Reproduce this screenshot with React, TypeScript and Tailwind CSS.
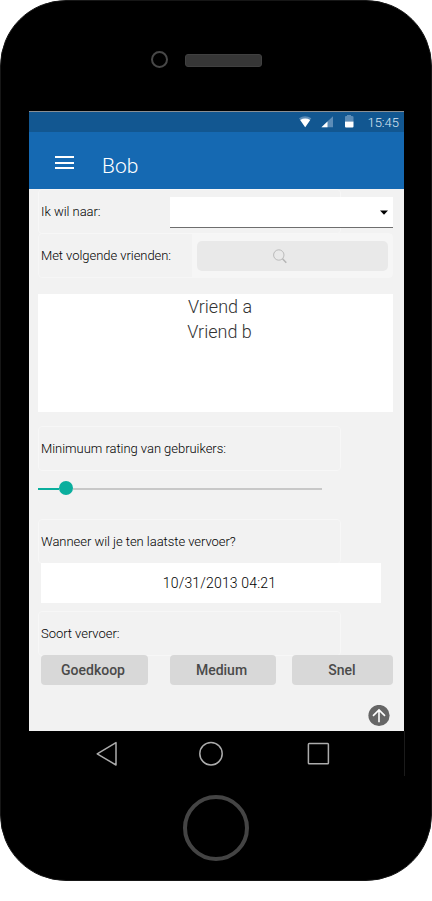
import type { ReactNode } from "react";

function FieldLabel({ children }: { children: ReactNode }) {
  return (
    <div className="flex h-[45px] w-[303px] shrink-0 items-center rounded-[4px] border border-[#f7f7f7] pl-[2px] text-[13px] font-light leading-4 tracking-[-0.04px] text-black">
      <span className="whitespace-nowrap">{children}</span>
    </div>
  );
}

function StatusBar() {
  return (
    <div className="flex h-[21px] items-center justify-end border-t border-[#8a8f94] bg-[#125791] pr-[5px]">
      <svg width="55" height="20" viewBox="0 0 55 20" className="mr-[13px]" aria-hidden="true">
        <path d="M0 6.200Q6 2.500 12.300 6.200L6.200 15Z" fill="#5c8cb7" />
        <path d="M1.200 8Q6.200 5.200 11.200 8L6.200 15.300Z" fill="#fff" />
        <path d="M22.500 15.300V15L34 4.300V15.300Z" fill="#5c8cb7" />
        <path d="M22.500 15.300L28.500 9.600V15.300Z" fill="#fff" />
        <path d="M46 9.500V5Q46 4 47 4H48V3H52V4H53Q54.500 4 54.500 5V9.500Z" fill="#5c8cb7" />
        <path d="M46 9.500H54.500V14.500Q54.500 15.500 53.500 15.500H47Q46 15.500 46 14.500Z" fill="#fff" />
      </svg>
      <span className="mt-px text-[13px] font-light leading-5 text-[#dce8f3]">15:45</span>
    </div>
  );
}

function AppBar() {
  return (
    <header className="flex h-[57px] items-center bg-[#1569b2] pl-[26px] text-white">
      <div className="mt-[4px] flex flex-col gap-[3.500px]">
        <div className="h-[2px] w-[19px] bg-white" />
        <div className="h-[2px] w-[19px] bg-white" />
        <div className="h-[2px] w-[19px] bg-white" />
      </div>
      <h1 className="mt-[11px] ml-7 text-[21px] font-light leading-7">Bob</h1>
    </header>
  );
}

function NavBar() {
  return (
    <nav className="-mr-px h-[45px] border-r border-[#1b1b1b] bg-black">
      <svg width="375" height="45" viewBox="0 0 375 45" fill="none" stroke="#acacac" strokeWidth="1.500" aria-hidden="true">
        <path d="M68.200 22.800L87 11.600V34Z" strokeLinejoin="round" />
        <circle cx="182" cy="22.700" r="11.200" />
        <rect x="279.400" y="12.600" width="20" height="20.200" rx=".8" />
      </svg>
    </nav>
  );
}

const transport = [
  { name: "Goedkoop", size: "w-[107px] pr-[3px]" },
  { name: "Medium", size: "ml-[22px] w-[106px] pr-[3px]" },
  { name: "Snel", size: "ml-4 w-[101px] pr-px" },
];

export default function App() {
  return (
    <div className="h-[901px] w-[432px] bg-white font-['Roboto','Liberation_Sans',sans-serif]">
      <div className="flex h-[881px] flex-col rounded-[66px] border border-[#161616] bg-black">
        <div className="flex h-[110px] shrink-0 pt-[50px] pl-[150px]">
          <div className="size-[17px] rounded-full border-[2.500px] border-[#484848]" />
          <div className="mt-[3px] ml-[16.500px] h-[13px] w-[77px] rounded-[3px] border border-[#404040] bg-[#363636]" />
        </div>
        <div className="ml-7 w-[375px] shrink-0">
          <StatusBar />
          <AppBar />
          <main className="h-[542px] bg-[#f2f2f2] pl-[9px]">
            <div className="flex h-[45px] items-start">
              <FieldLabel>Ik wil naar:</FieldLabel>
              <button className="z-10 mt-2 -ml-[171px] flex h-[31px] w-[223px] items-center justify-end border-b border-[#6e6e6e] bg-white pr-[5px]">
                <svg width="8" height="5" viewBox="0 0 8 5" aria-hidden="true">
                  <path d="M0 .5H8L4 4.700Z" fill="#000" />
                </svg>
              </button>
            </div>
            <div className="-mt-px flex h-[45px] w-[355px] rounded-[4px] border border-[#f6f6f6]">
              <div className="flex w-[153px] items-center pl-[2px] text-[13px] font-light tracking-[-0.05px] text-black">
                <span className="whitespace-nowrap">Met volgende vrienden:</span>
              </div>
              <div className="flex flex-1 bg-[#f6f6f6] pt-[7px] pl-[5px]">
                <button className="flex h-[30px] w-[191px] items-center justify-center rounded-[5px] bg-[#e9e9e9] pr-[26px]">
                  <svg width="14" height="15" viewBox="0 0 14 15" className="mt-px" fill="none" stroke="#b5b5b5" aria-hidden="true">
                    <circle cx="5.800" cy="6" r="5.200" strokeWidth=".9" />
                    <path d="M9.500 9.800L13.300 13.700" strokeWidth="1.500" />
                  </svg>
                </button>
              </div>
            </div>
            <ul className="mt-4 h-[118px] w-[355px] bg-white pl-[9px] text-center text-[18px] font-light leading-[25px] text-[#333]">
              <li>Vriend a</li>
              <li className="pr-px">Vriend b</li>
            </ul>
            <div className="mt-[14px]">
              <FieldLabel>Minimuum rating van gebruikers:</FieldLabel>
            </div>
            <div className="mt-[10px] flex h-[14px] w-[284px] items-center">
              <div className="mt-[2px] h-[2px] w-[21px] bg-[#0aae9d]" />
              <div className="size-[14px] rounded-full bg-[#0aae9d]" />
              <div className="mt-[2px] h-[2px] flex-1 bg-[#c8c8c8]" />
            </div>
            <div className="mt-6">
              <FieldLabel>Wanneer wil je ten laatste vervoer?</FieldLabel>
            </div>
            <div className="-mt-px ml-[3px] flex h-10 w-[340px] items-center justify-center bg-white pl-[17px] text-[14px] font-light tracking-[.17px] text-black">
              10/31/2013 04:21
            </div>
            <div className="mt-2">
              <FieldLabel>Soort vervoer:</FieldLabel>
            </div>
            <div className="-mt-px ml-[3px] flex">
              {transport.map(({ name, size }) => (
                <button key={name} className={`h-[30px] rounded-[4px] bg-[#d8d8d8] text-[14px] font-medium text-[#4a4a4a] ${size}`}>
                  {name}
                </button>
              ))}
            </div>
            <div className="mt-5 ml-[330px]">
              <svg width="22" height="22" viewBox="0 0 22 22" aria-hidden="true">
                <circle cx="11" cy="10.500" r="10.600" fill="#666" />
                <path d="M11 17.200V5M5 10.900L11 4.900L17 10.900" fill="none" stroke="#fff" strokeWidth="1.600" />
              </svg>
            </div>
          </main>
          <NavBar />
        </div>
        <div className="mx-auto mt-[19px] size-[66px] shrink-0 rounded-full border-[4px] border-[#444]" />
      </div>
    </div>
  );
}
